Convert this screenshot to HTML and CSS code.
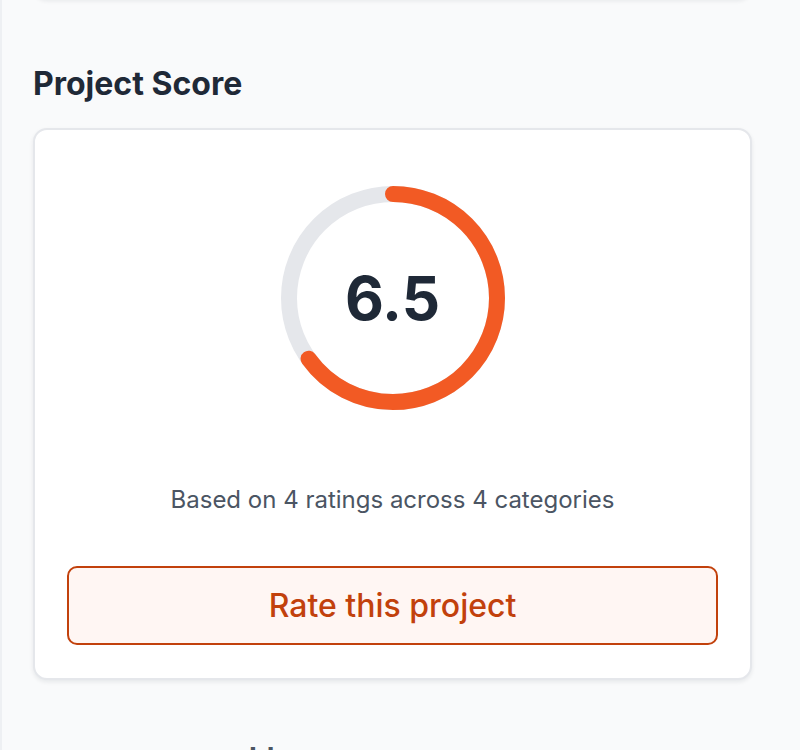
FILE: index.html
```html
<!DOCTYPE html>
<html lang="en">
<head>
<meta charset="utf-8">
<title>Project Score</title>
<link rel="stylesheet" href="styles.css">
</head>
<body>
  <div class="page">
    <div class="card card-prev"></div>

    <section class="score-section">
      <h2 class="section-title">Project Score</h2>
      <div class="card score-card">
        <div class="gauge">
          <svg class="gauge-ring" width="226" height="226" viewBox="0 0 226 226" aria-hidden="true">
            <circle class="gauge-track" cx="113" cy="113" r="104"></circle>
            <!-- 65% of the circumference (2π·104 ≈ 653.5) -->
            <circle class="gauge-value" cx="113" cy="113" r="104"
                    stroke-dasharray="424.8 653.5" transform="rotate(-90 113 113)"></circle>
          </svg>
          <span class="gauge-number">6.5</span>
        </div>
        <p class="score-meta">Based on 4 ratings across 4 categories</p>
        <button class="rate-btn" type="button">Rate this project</button>
      </div>
    </section>

    <section class="next-section">
      <h3 class="next-title">Ideas</h3>
    </section>
  </div>
</body>
</html>
```

FILE: styles.css
```css
* {
  box-sizing: border-box;
}

html, body {
  margin: 0;
  padding: 0;
}

body {
  background: #f9fafb;
  font-family: Inter, "Noto Sans", "Liberation Sans", sans-serif;
  color: #1f2937;
  border-left: 2px solid #eef0f3;
  height: 750px;
  overflow: hidden;
}

.page {
  padding: 0 48px 0 31px;
}

.card {
  background: #ffffff;
  border: 2px solid #e5e7eb;
  border-radius: 14px;
  box-shadow: 0 2px 4px rgba(17, 24, 39, 0.08);
}

.card-prev {
  height: 40px;
  margin-top: -41px;
}

.score-section {
  padding-top: 65px;
}

.section-title {
  margin: 0 0 24px;
  font-size: 32px;
  font-weight: 700;
  line-height: 40px;
  color: #1f2937;
}

.score-card {
  display: flex;
  flex-direction: column;
  align-items: center;
  padding: 55px 32px 33px;
}

.gauge {
  position: relative;
  width: 226px;
  height: 226px;
}

.gauge-ring {
  display: block;
}

.gauge-track,
.gauge-value {
  fill: none;
  stroke-width: 16;
}

.gauge-track {
  stroke: #e5e7eb;
}

.gauge-value {
  stroke: #f25a24;
  stroke-linecap: round;
}

.gauge-number {
  position: absolute;
  inset: 0;
  display: flex;
  align-items: center;
  justify-content: center;
  font-size: 60px;
  font-weight: 700;
  color: #1f2937;
}

.score-meta {
  margin: 73px 0 50px;
  font-size: 24px;
  line-height: 32px;
  color: #4b5563;
}

.rate-btn {
  width: 100%;
  height: 79px;
  flex-shrink: 0;
  background: #fff6f3;
  border: 2px solid #c2410c;
  border-radius: 10px;
  color: #c2410c;
  font-family: inherit;
  font-size: 32px;
  font-weight: 500;
  cursor: pointer;
}

.next-section {
  padding-top: 61px;
  padding-left: 216px;
}

.next-title {
  margin: 0;
  font-size: 28px;
  font-weight: 700;
  line-height: 34px;
  color: #4b5563;
}
```
